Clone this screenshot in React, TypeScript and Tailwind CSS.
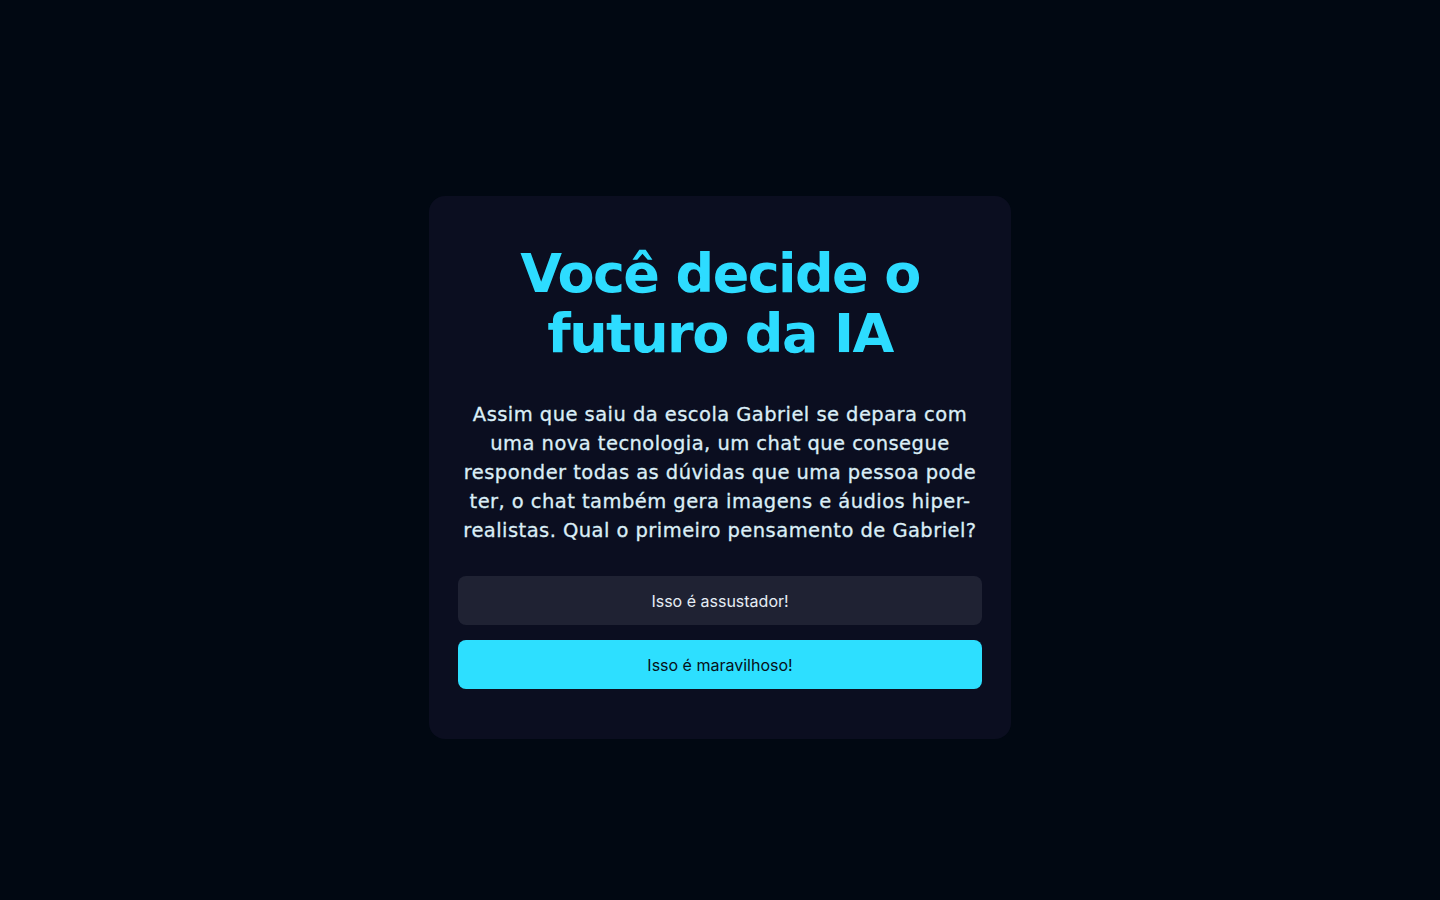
const App = () => {
  return (
    <div className="flex min-h-screen w-full items-center justify-center bg-[#010812] pt-[35px]">
      <div className="flex w-[582px] flex-col items-center rounded-2xl bg-[#0b0e20] px-[29px] pt-12 pb-[50px]">
        <h1 className="text-center font-['DejaVu_Sans',sans-serif] text-[54px] leading-[60px] font-bold tracking-[-1.6px] text-[#2ddcff]">
          Você decide o
          <br />
          futuro da IA
        </h1>
        <p className="mt-[36px] text-center font-['DejaVu_Sans',sans-serif] text-[19.5px] leading-[29px] tracking-[0.45px] text-[#dbeef7] [-webkit-text-stroke:0.3px_#dbeef7]">
          Assim que saiu da escola Gabriel se depara com
          <br />
          uma nova tecnologia, um chat que consegue
          <br />
          responder todas as dúvidas que uma pessoa pode
          <br />
          ter, o chat também gera imagens e áudios hiper-
          <br />
          realistas. Qual o primeiro pensamento de Gabriel?
        </p>
        <div className="mt-[31px] flex w-full flex-col gap-[15px] font-['Inter',sans-serif] text-base">
          <button className="h-[49px] w-full rounded-lg bg-[#1f2233] text-[#e6eef6]">
            Isso é assustador!
          </button>
          <button className="h-[49px] w-full rounded-lg bg-[#2ddfff] text-[#071018]">
            Isso é maravilhoso!
          </button>
        </div>
      </div>
    </div>
  );
};

export default App;
